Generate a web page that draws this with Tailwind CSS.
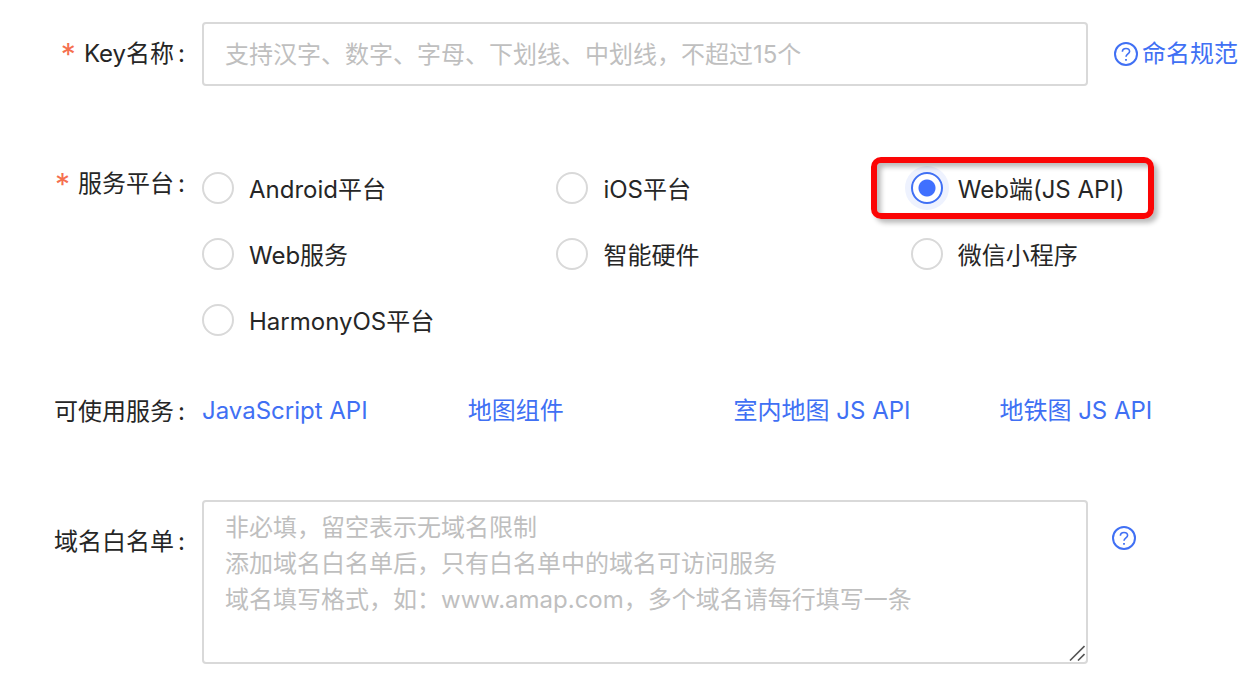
<!DOCTYPE html>
<html lang="zh-CN">
  <head>
    <meta charset="UTF-8">
    <meta name="viewport" content="width=device-width, initial-scale=1.0">
    <title>添加Key</title>
    <script src="https://cdn.jsdelivr.net/npm/@tailwindcss/browser@4"></script>
  </head>
  <body class="bg-white text-[#262626] text-2xl leading-9 font-[Inter,'Noto_Sans_CJK_SC',sans-serif] whitespace-nowrap">
    <form class="pt-[22px]">
      <!-- Key name -->
      <div class="flex items-start">
        <label for="keyName" class="flex w-[202px] shrink-0 justify-end pr-[17px] pt-[14px]">
          <span class="mr-2 text-3xl/9 text-[#f5704f]" aria-hidden="true">*</span>Key名称<span class="ml-1">:</span>
        </label>
        <input id="keyName" type="text" placeholder="支持汉字、数字、字母、下划线、中划线，不超过15个" class="h-16 min-w-0 grow rounded border-2 border-[#d9d9d9] px-[21px] placeholder:text-[#bfbfbf] focus:outline-none">
        <div class="w-[170px] shrink-0 pl-[26px] pt-[14px]">
          <a href="#" class="flex items-center gap-1 text-[#4070f4]">
            <svg class="size-6" viewBox="0 0 24 24" fill="none" stroke="currentColor" stroke-width="2">
              <circle cx="12" cy="12" r="11" />
              <path d="M8.4 9.8C8.4 7.6 10 6.5 12 6.5s3.6 1.2 3.6 3.1c0 2.3-3.6 2.5-3.6 5.2" stroke-width="1.6" />
              <path d="M12 16.9v1.8" stroke-width="1.8" />
            </svg>
            命名规范
          </a>
        </div>
      </div>

      <!-- Platform -->
      <div class="mt-[69px] flex items-start" role="radiogroup" aria-labelledby="platformLabel">
        <div id="platformLabel" class="flex w-[202px] shrink-0 justify-end pr-[17px] pt-[11px]">
          <span class="mr-2 text-3xl/9 text-[#f5704f]" aria-hidden="true">*</span>服务平台<span class="ml-1">:</span>
        </div>
        <div class="mr-[170px] grid min-w-0 grow grid-cols-[40%_40%_20%]">
          <label class="flex h-[66px] items-center gap-[15px]">
            <input type="radio" name="platform" class="size-8 shrink-0 appearance-none rounded-full border-2 border-[#d9d9d9] checked:border-[#4070f4]">
            <span class="pt-1">Android平台</span>
          </label>
          <label class="flex h-[66px] items-center gap-[15px]">
            <input type="radio" name="platform" class="size-8 shrink-0 appearance-none rounded-full border-2 border-[#d9d9d9] checked:border-[#4070f4]">
            <span class="pt-1">iOS平台</span>
          </label>
          <label class="relative flex h-[66px] items-center gap-[15px]">
            <input type="radio" name="platform" checked class="size-8 shrink-0 appearance-none rounded-full border-2 border-[#4070f4] bg-[radial-gradient(circle,#4070ff_8px,#fff_9px)] shadow-[0_0_0_6px_#eef2fe]">
            <span class="pt-1">Web端(JS API)</span>
            <span class="pointer-events-none absolute -left-10 top-0.5 h-[62px] w-[283px] rounded-[10px] border-[6px] border-[#fb0505] shadow-[4px_4px_5px_#0004,inset_4px_4px_5px_#0004]"></span>
          </label>
          <label class="flex h-[66px] items-center gap-[15px]">
            <input type="radio" name="platform" class="size-8 shrink-0 appearance-none rounded-full border-2 border-[#d9d9d9] checked:border-[#4070f4]">
            <span class="pt-1">Web服务</span>
          </label>
          <label class="flex h-[66px] items-center gap-[15px]">
            <input type="radio" name="platform" class="size-8 shrink-0 appearance-none rounded-full border-2 border-[#d9d9d9] checked:border-[#4070f4]">
            <span class="pt-1">智能硬件</span>
          </label>
          <label class="flex h-[66px] items-center gap-[15px]">
            <input type="radio" name="platform" class="size-8 shrink-0 appearance-none rounded-full border-2 border-[#d9d9d9] checked:border-[#4070f4]">
            <span class="pt-1">微信小程序</span>
          </label>
          <label class="flex h-[66px] items-center gap-[15px]">
            <input type="radio" name="platform" class="size-8 shrink-0 appearance-none rounded-full border-2 border-[#d9d9d9] checked:border-[#4070f4]">
            <span class="pt-1">HarmonyOS平台</span>
          </label>
        </div>
      </div>

      <!-- Services -->
      <div class="mt-10 flex items-start">
        <div class="flex w-[202px] shrink-0 justify-end pr-[17px] pt-px">可使用服务<span class="ml-1">:</span></div>
        <div class="mr-[170px] grid min-w-0 grow grid-cols-[30%_30%_30%_10%] text-[#4070f4]">
          <a href="#">JavaScript API</a>
          <a href="#">地图组件</a>
          <a href="#">室内地图 JS API</a>
          <a href="#">地铁图 JS API</a>
        </div>
      </div>

      <!-- Domain whitelist -->
      <div class="mt-[70px] flex items-start">
        <label for="whitelist" class="flex w-[202px] shrink-0 justify-end pr-[17px] pt-6">域名白名单<span class="ml-1">:</span></label>
        <div class="relative flex min-w-0 grow">
          <textarea id="whitelist" placeholder="非必填，留空表示无域名限制&#10;添加域名白名单后，只有白名单中的域名可访问服务&#10;域名填写格式，如：www.amap.com，多个域名请每行填写一条" class="h-[164px] w-full resize-none rounded border-2 border-[#d9d9d9] px-[21px] py-2 placeholder:text-[#bfbfbf] focus:outline-none"></textarea>
          <svg class="pointer-events-none absolute bottom-[3px] right-[3px] size-4" viewBox="0 0 16 16" fill="none" stroke="#555" stroke-width="1.6">
            <path d="M1 15.5 15.5 1M9 15.5 15.5 9" />
          </svg>
        </div>
        <div class="w-[170px] shrink-0 pl-6 pt-[26px]">
          <button type="button" aria-label="帮助" class="block text-[#4070f4]">
            <svg class="size-6" viewBox="0 0 24 24" fill="none" stroke="currentColor" stroke-width="2">
              <circle cx="12" cy="12" r="11" />
              <path d="M8.4 9.8C8.4 7.6 10 6.5 12 6.5s3.6 1.2 3.6 3.1c0 2.3-3.6 2.5-3.6 5.2" stroke-width="1.6" />
              <path d="M12 16.9v1.8" stroke-width="1.8" />
            </svg>
          </button>
        </div>
      </div>
    </form>
  </body>
</html>
